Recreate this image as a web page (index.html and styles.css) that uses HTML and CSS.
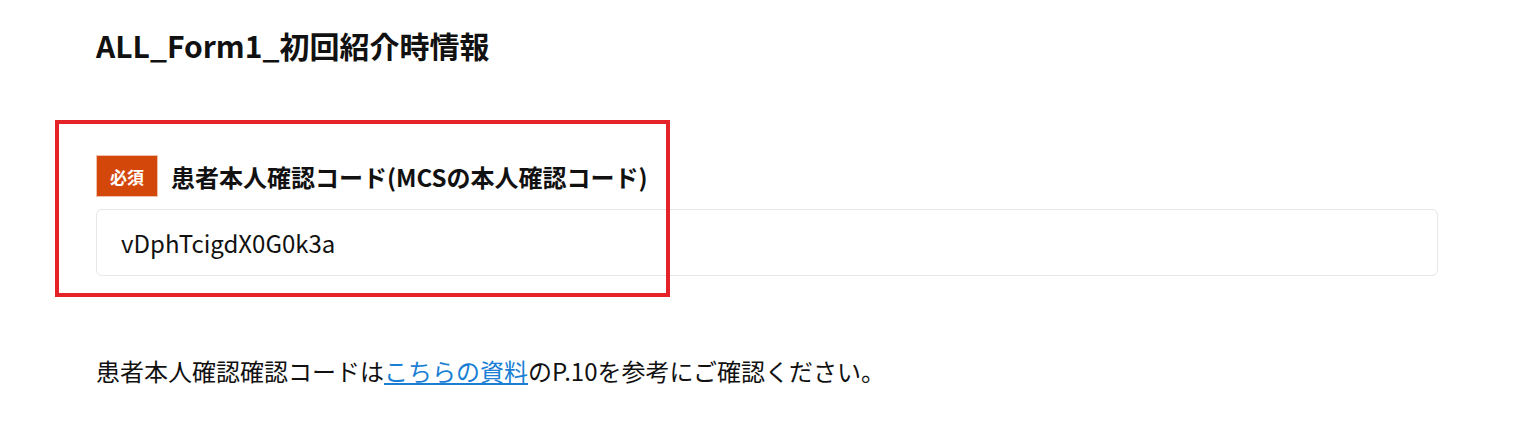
FILE: index.html
```html
<!DOCTYPE html>
<html lang="ja">
<head>
    <meta charset="UTF-8">
    <meta name="viewport" content="width=device-width, initial-scale=1.0">
    <title>ALL_Form1_初回紹介時情報</title>
    <link rel="stylesheet" href="styles.css">
</head>
<body>
<div class="form-page">
    <h1 class="form-title">ALL_Form1_初回紹介時情報</h1>

    <div class="field">
        <div class="field-label">
            <span class="badge-required">必須</span>
            <span class="label-text">患者本人確認コード(MCSの本人確認コード)</span>
        </div>
        <input class="text-input" type="text" value="vDphTcigdX0G0k3a">
        <div class="highlight-box"></div>
    </div>

    <p class="note">患者本人確認確認コードは<a href="#">こちらの資料</a>のP.10を参考にご確認ください。</p>
</div>
</body>
</html>
```

FILE: styles.css
```css
body {
    margin: 0;
    background-color: #ffffff;
    font-family: "Noto Sans CJK JP", "Noto Sans", sans-serif;
    color: #111111;
}

.form-page {
    padding: 20px 97px 40px 96px;
}

.form-title {
    margin: 0;
    font-size: 30px;
    font-weight: bold;
    line-height: 50px;
}

.field {
    position: relative;
    margin-top: 85px;
}

.field-label {
    display: flex;
    align-items: center;
    gap: 13px;
}

.badge-required {
    display: flex;
    align-items: center;
    justify-content: center;
    width: 60px;
    height: 40px;
    background-color: #d4470b;
    border: 1px solid #f0c0a8;
    color: #ffffff;
    font-size: 17px;
    font-weight: bold;
}

.label-text {
    font-size: 24px;
    font-weight: bold;
}

.text-input {
    display: block;
    box-sizing: border-box;
    width: 100%;
    height: 67px;
    margin-top: 12px;
    padding: 0 24px;
    border: 1px solid #e6e6e6;
    border-radius: 6px;
    font-family: inherit;
    font-size: 24px;
    color: #111111;
    outline: none;
}

/* red frame drawn over the required field */
.highlight-box {
    position: absolute;
    left: -41px;
    top: -35px;
    width: 607px;
    height: 169px;
    border: 4px solid #e52228;
}

.note {
    margin: 75px 0 0;
    font-size: 24px;
    line-height: 40px;
}

.note a {
    color: #1a7fd4;
    text-decoration: underline;
}
```
